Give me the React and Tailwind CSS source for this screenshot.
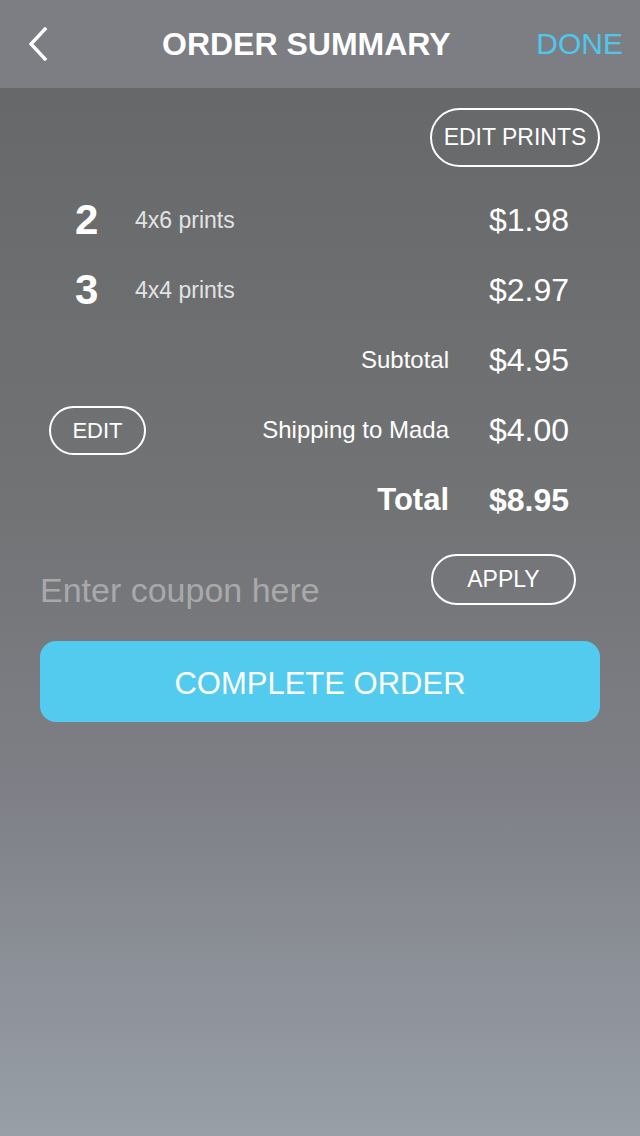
import React from 'react';

const items = [
  { qty: 2, size: '4x6 prints', price: '$1.98' },
  { qty: 3, size: '4x4 prints', price: '$2.97' },
];

function BackChevron() {
  return (
    <svg width="20" height="34" viewBox="0 0 20 34" fill="none">
      <path d="M16 2 L2 17 L16 32" stroke="white" strokeWidth="3.4" strokeLinecap="square" />
    </svg>
  );
}

function SummaryRow({ label, price, bold, children }) {
  return (
    <div className="flex h-[70px] items-center pr-[31px]">
      <div className="flex flex-1 items-center justify-between pl-[9px]">
        <div>{children}</div>
        <span className={bold ? 'text-[31px] font-bold text-white' : 'text-[24px] text-white'}>{label}</span>
      </div>
      <span className={`ml-[40px] w-[80px] text-right text-[32px] text-white ${bold ? 'font-bold' : ''}`}>
        {price}
      </span>
    </div>
  );
}

export default function App() {
  return (
    <div
      className="flex h-[1136px] w-[640px] flex-col bg-[linear-gradient(180deg,#656667_0%,#727375_45%,#7f8087_70%,#989fa7_100%)]"
      style={{ fontFamily: '"Liberation Sans", Arial, sans-serif' }}
    >
      {/* header */}
      <div className="flex h-[88px] items-center bg-[#7c7e84] pl-[29px] pr-[17px]">
        <button type="button" className="flex items-center">
          <BackChevron />
        </button>
        <h1 className="ml-[113px] text-[32px] font-bold leading-none text-white">ORDER SUMMARY</h1>
        <button type="button" className="ml-auto text-[30px] font-light leading-none text-[#4ec8ea]">
          DONE
        </button>
      </div>

      <div className="flex flex-col px-[40px]">
        <div className="mt-[20px] flex justify-end">
          <button
            type="button"
            className="h-[59px] w-[170px] rounded-full border-2 border-white text-[23px] text-white"
          >
            EDIT PRINTS
          </button>
        </div>

        <div className="mt-[18px] flex flex-col">
          {items.map((item) => (
            <div key={item.size} className="flex h-[70px] items-center pl-[35px] pr-[31px]">
              <span className="w-[60px] text-[42px] font-bold leading-none text-white">{item.qty}</span>
              <span className="flex-1 text-[23px] text-[#e2e2e2]">{item.size}</span>
              <span className="w-[80px] text-right text-[32px] text-white">{item.price}</span>
            </div>
          ))}
          <SummaryRow label="Subtotal" price="$4.95" />
          <SummaryRow label="Shipping to Mada" price="$4.00">
            <button
              type="button"
              className="h-[49px] w-[97px] rounded-full border-2 border-white text-[22px] text-white"
            >
              EDIT
            </button>
          </SummaryRow>
          <SummaryRow label="Total" price="$8.95" bold />
        </div>

        <div className="mt-[19px] flex items-start justify-between pr-[24px]">
          <input
            type="text"
            placeholder="Enter coupon here"
            className="mt-[16px] h-[40px] w-[340px] bg-transparent text-[34px] font-light text-white outline-none placeholder:text-[#a9a9aa]"
          />
          <button
            type="button"
            className="h-[51px] w-[145px] rounded-full border-2 border-white text-[23px] text-white"
          >
            APPLY
          </button>
        </div>

        <button
          type="button"
          className="mt-[31px] h-[81px] w-full rounded-[16px] bg-[#52cbee] pt-[5px] text-[31px] text-white"
        >
          COMPLETE ORDER
        </button>
      </div>
    </div>
  );
}
